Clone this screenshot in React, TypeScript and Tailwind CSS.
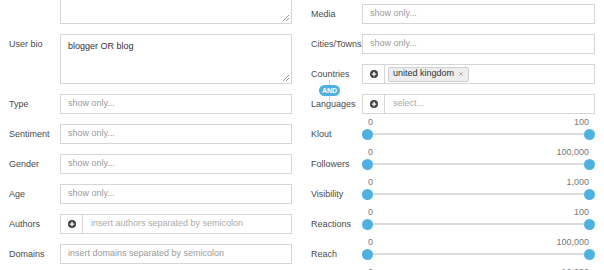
import { Plus, X } from "lucide-react";

const font = { fontFamily: '"Liberation Sans", Arial, sans-serif' };

const PlusBtn = () => (
  <div className="flex h-full w-[22px] shrink-0 items-center justify-center border-r border-[#d6d6d6]">
    <span className="flex h-[8px] w-[8px] items-center justify-center rounded-full bg-[#444]">
      <Plus className="h-[6px] w-[6px] text-white" strokeWidth={5} />
    </span>
  </div>
);

const Label = ({ children }: { children: React.ReactNode }) => (
  <div className="w-[51px] shrink-0 whitespace-nowrap text-[9px] leading-[20px] text-[#4a4a4a]">
    {children}
  </div>
);

const TextInput = ({ placeholder }: { placeholder: string }) => (
  <div className="flex h-[20px] flex-1 items-center border border-[#d6d6d6] bg-white px-[7px] text-[9px] text-[#9a9a9a]">
    {placeholder}
  </div>
);

// textarea with the little resize grip drawn in the corner
const Area = ({ value }: { value?: string }) => (
  <div className="relative h-[50px] flex-1">
    <textarea
      className="h-full w-full resize-none border border-[#d6d6d6] px-[7px] py-[6px] text-[9px] leading-[11px] text-[#333] outline-none"
      defaultValue={value}
    />
    <svg className="pointer-events-none absolute bottom-[3px] right-[3px] h-[7px] w-[7px]" viewBox="0 0 7 7">
      <path d="M1 7 L7 1 M4 7 L7 4" stroke="#999" strokeWidth="1" />
    </svg>
  </div>
);

const Slider = ({ label, max }: { label: string; max: string }) => (
  <div className="flex h-[30px] items-end">
    <div className="w-[51px] shrink-0 text-[9px] leading-[20px] text-[#4a4a4a]">{label}</div>
    <div className="flex flex-1 flex-col pt-[2px]">
      <div className="flex justify-between px-[6px] text-[9px] leading-[12px] text-[#777]">
        <span>0</span>
        <span>{max}</span>
      </div>
      <div className="flex h-[12px] items-center">
        <span className="h-[11px] w-[11px] shrink-0 rounded-full bg-[#4fb1e1]" />
        <span className="h-[2px] flex-1 bg-[#dcdcdc]" />
        <span className="h-[11px] w-[11px] shrink-0 rounded-full bg-[#4fb1e1]" />
      </div>
      <div className="h-[4px]" />
    </div>
  </div>
);

export default function App() {
  return (
    <div className="h-[270px] w-[604px] overflow-hidden bg-white" style={font}>
      <div className="flex">
        {/* left column */}
        <div className="-mt-[26px] flex w-[292px] flex-col gap-[10px] pl-[9px]">
          <div className="flex items-start">
            <Label>{""}</Label>
            <Area />
          </div>
          <div className="flex items-start">
            <Label>User bio</Label>
            <Area value="blogger OR blog" />
          </div>
          {["Type", "Sentiment", "Gender", "Age"].map((l) => (
            <div key={l} className="flex items-start">
              <Label>{l}</Label>
              <TextInput placeholder="show only..." />
            </div>
          ))}
          <div className="flex items-start">
            <Label>Authors</Label>
            <div className="flex h-[20px] flex-1 items-center border border-[#d6d6d6]">
              <PlusBtn />
              <span className="pl-[8px] text-[9px] text-[#aaa]">insert authors separated by semicolon</span>
            </div>
          </div>
          <div className="flex items-start">
            <Label>Domains</Label>
            <TextInput placeholder="insert domains separated by semicolon" />
          </div>
        </div>

        {/* right column */}
        <div className="mt-[4px] flex w-[303px] flex-col pl-[19px]">
          <div className="flex flex-col gap-[10px]">
            <div className="flex items-start">
              <Label>Media</Label>
              <TextInput placeholder="show only..." />
            </div>
            <div className="flex items-start">
              <Label>Cities/Towns</Label>
              <TextInput placeholder="show only..." />
            </div>
            <div className="relative flex items-start">
              <Label>Countries</Label>
              <div className="flex h-[20px] flex-1 items-center border border-[#d6d6d6] bg-white">
                <PlusBtn />
                <span className="ml-[3px] flex h-[15px] items-center gap-[4px] rounded-[2px] border border-[#cfcfcf] bg-[#eeeeee] px-[4px] text-[9px] text-[#333]">
                  united kingdom
                  <X className="h-[6px] w-[6px] text-[#999]" strokeWidth={3} />
                </span>
              </div>
              <div className="absolute left-[8px] top-[16px] flex flex-col items-center">
                <span className="h-[5px] w-px bg-[#bcd9ea]" />
                <span className="flex h-[11px] w-[21px] items-center justify-center rounded-full bg-[#4fb1e1] text-[7px] font-bold leading-none text-white">
                  AND
                </span>
                <span className="h-[5px] w-px bg-[#bcd9ea]" />
              </div>
            </div>
            <div className="flex items-start">
              <Label>Languages</Label>
              <div className="flex h-[20px] flex-1 items-center border border-[#d6d6d6]">
                <PlusBtn />
                <span className="pl-[8px] text-[9px] text-[#aaa]">select...</span>
              </div>
            </div>
          </div>
          <Slider label="Klout" max="100" />
          <Slider label="Followers" max="100,000" />
          <Slider label="Visibility" max="1,000" />
          <Slider label="Reactions" max="100" />
          <Slider label="Reach" max="100,000" />
          <Slider label="Impressions" max="10,000" />
        </div>
      </div>
    </div>
  );
}
